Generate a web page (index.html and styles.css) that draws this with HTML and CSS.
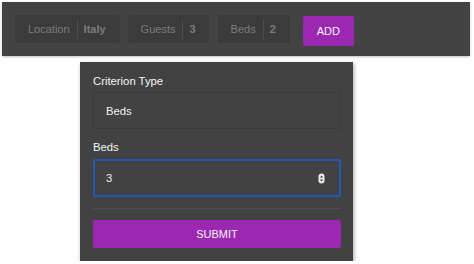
FILE: index.html
```html
<!DOCTYPE html>
<html>
<head>
<meta charset="utf-8">
<link rel="stylesheet" href="styles.css">
</head>
<body>
<div class="bar">
  <div class="chip"><span class="chip-label">Location</span><span class="chip-value">Italy</span></div>
  <div class="chip chip-guests"><span class="chip-label">Guests</span><span class="chip-value">3</span></div>
  <div class="chip chip-beds"><span class="chip-label">Beds</span><span class="chip-value">2</span></div>
  <button class="add">ADD</button>
</div>
<div class="panel">
  <div class="label">Criterion Type</div>
  <div class="select">Beds</div>
  <div class="label label-second">Beds</div>
  <div class="input">
    <span>3</span>
    <svg class="spin" width="7" height="11" viewBox="0 0 7 11">
      <rect x="0.5" y="0.5" width="6" height="10" rx="3" fill="#ececec"/>
      <path d="M1.8 4.6 L3.5 2.4 L5.2 4.6 Z" fill="#444"/>
      <path d="M1.8 6.4 L3.5 8.6 L5.2 6.4 Z" fill="#444"/>
    </svg>
  </div>
  <div class="divider"></div>
  <button class="submit">SUBMIT</button>
</div>
</body>
</html>
```
FILE: styles.css
```css
* { box-sizing: border-box; }
body {
  margin: 0;
  background: #ffffff;
  font-family: "Liberation Sans", Arial, sans-serif;
  font-size: 11px;
}
.bar {
  margin: 2px 0 0 2px;
  width: 468px;
  height: 54px;
  background: #434343;
  display: flex;
  align-items: flex-start;
  padding: 13px 0 0 13px;
  box-shadow: 0 1px 2px rgba(0,0,0,0.25);
}
.chip {
  height: 28px;
  background: #3b3b3b;
  display: flex;
  align-items: center;
  padding: 0 14px 0 13px;
  color: #7c7c7c;
  border-radius: 2px;
  margin-right: 8px;
}
.chip-guests { padding: 0 13px 0 13px; margin-right: 9px; }
.chip-beds { margin-right: 13px; }
.chip-label {
  padding-right: 7px;
  border-right: 1px solid #4d4d4d;
  line-height: 20px;
}
.chip-value {
  padding-left: 6px;
  font-weight: bold;
}
.add {
  margin-top: 1px;
  width: 51px;
  height: 30px;
  border: none;
  border-radius: 2px;
  background: #9c27b0;
  color: #f6f6f6;
  font-family: "Liberation Sans", Arial, sans-serif;
  font-size: 11px;
  padding: 0;
}
.panel {
  margin: 6px 0 0 80px;
  width: 273px;
  height: 199px;
  background: #424242;
  padding: 13px 12px 0 13px;
  box-shadow: 1px 2px 4px rgba(0,0,0,0.35);
}
.label {
  color: #f4f4f4;
  line-height: 13px;
  font-size: 11.3px;
}
.label-second { margin-top: 12px; }
.select {
  margin-top: 4px;
  height: 37px;
  border: 1px solid #3a3a3a;
  border-radius: 2px;
  color: #f0f0f0;
  display: flex;
  align-items: center;
  padding-left: 12px;
  font-size: 11.3px;
}
.input {
  margin-top: 5px;
  height: 38px;
  border: 2px solid #2458b8;
  border-radius: 2px;
  color: #f0f0f0;
  display: flex;
  align-items: center;
  justify-content: space-between;
  padding: 0 14px 0 11px;
  font-size: 11.3px;
}
.spin { display: block; }
.divider {
  margin-top: 11px;
  height: 1px;
  background: #4e4e4e;
}
.submit {
  display: block;
  margin-top: 11px;
  width: 248px;
  height: 28px;
  border: none;
  border-radius: 2px;
  background: #9c27b0;
  color: #f6f6f6;
  font-family: "Liberation Sans", Arial, sans-serif;
  font-size: 11px;
  padding: 0;
}
```
